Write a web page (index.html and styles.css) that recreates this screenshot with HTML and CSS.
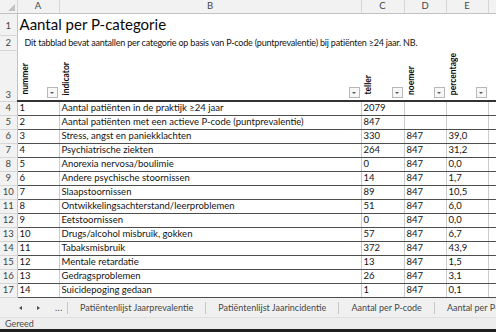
FILE: index.html
```html
<!DOCTYPE html>
<html lang="nl">
<head>
  <meta charset="UTF-8">
  <meta name="viewport" content="width=device-width, initial-scale=1.0">
  <title>Aantal per P-categorie</title>
  <link rel="stylesheet" href="styles.css">
</head>
<body>
  <div class="sheet">
    <table class="grid">
      <colgroup>
        <col class="c-rh"><col class="c-a"><col class="c-b"><col class="c-c"><col class="c-d"><col class="c-e"><col class="c-f">
      </colgroup>
      <thead>
        <tr class="letters">
          <th class="corner"><span class="corner__tri"></span></th>
          <th>A</th><th>B</th><th>C</th><th>D</th><th>E</th><th></th>
        </tr>
      </thead>
      <tbody>
        <tr class="r-title">
          <th class="rh">1</th>
          <td colspan="6" class="title">Aantal per P-categorie</td>
        </tr>
        <tr class="r-sub">
          <th class="rh">2</th>
          <td colspan="6" class="sub">Dit tabblad bevat aantallen per categorie op basis van P-code (puntprevalentie) bij patiënten ≥24 jaar. NB.</td>
        </tr>
        <tr class="r-head">
          <th class="rh">3</th>
          <td class="hd"><span class="hd__txt">nummer</span><span class="filter"></span></td>
          <td class="hd"><span class="hd__txt">indicator</span><span class="filter"></span></td>
          <td class="hd"><span class="hd__txt">teller</span><span class="filter"></span></td>
          <td class="hd"><span class="hd__txt">noemer</span><span class="filter"></span></td>
          <td class="hd"><span class="hd__txt">percentage</span><span class="filter"></span></td>
          <td class="hd"></td>
        </tr>
        <tr><th class="rh">4</th><td>1</td><td>Aantal patiënten in de praktijk ≥24 jaar</td><td>2079</td><td></td><td></td><td class="off"></td></tr>
        <tr><th class="rh">5</th><td>2</td><td>Aantal patiënten met een actieve P-code (puntprevalentie)</td><td>847</td><td></td><td></td><td class="off"></td></tr>
        <tr><th class="rh">6</th><td>3</td><td>Stress, angst en paniekklachten</td><td>330</td><td>847</td><td>39,0</td><td class="off"></td></tr>
        <tr><th class="rh">7</th><td>4</td><td>Psychiatrische ziekten</td><td>264</td><td>847</td><td>31,2</td><td class="off"></td></tr>
        <tr><th class="rh">8</th><td>5</td><td>Anorexia nervosa/boulimie</td><td>0</td><td>847</td><td>0,0</td><td class="off"></td></tr>
        <tr><th class="rh">9</th><td>6</td><td>Andere psychische stoornissen</td><td>14</td><td>847</td><td>1,7</td><td class="off"></td></tr>
        <tr><th class="rh">10</th><td>7</td><td>Slaapstoornissen</td><td>89</td><td>847</td><td>10,5</td><td class="off"></td></tr>
        <tr><th class="rh">11</th><td>8</td><td>Ontwikkelingsachterstand/leerproblemen</td><td>51</td><td>847</td><td>6,0</td><td class="off"></td></tr>
        <tr><th class="rh">12</th><td>9</td><td>Eetstoornissen</td><td>0</td><td>847</td><td>0,0</td><td class="off"></td></tr>
        <tr><th class="rh">13</th><td>10</td><td>Drugs/alcohol misbruik, gokken</td><td>57</td><td>847</td><td>6,7</td><td class="off"></td></tr>
        <tr><th class="rh">14</th><td>11</td><td>Tabaksmisbruik</td><td>372</td><td>847</td><td>43,9</td><td class="off"></td></tr>
        <tr><th class="rh">15</th><td>12</td><td>Mentale retardatie</td><td>13</td><td>847</td><td>1,5</td><td class="off"></td></tr>
        <tr><th class="rh">16</th><td>13</td><td>Gedragsproblemen</td><td>26</td><td>847</td><td>3,1</td><td class="off"></td></tr>
        <tr><th class="rh">17</th><td>14</td><td>Suicidepoging gedaan</td><td>1</td><td>847</td><td>0,1</td><td class="off"></td></tr>
      </tbody>
    </table>
  </div>

  <div class="tabs">
    <div class="tabs__nav">
      <span class="tabs__arrow tabs__arrow--left"></span>
      <span class="tabs__arrow tabs__arrow--right"></span>
      <span class="tabs__more">...</span>
    </div>
    <span class="tab">Patiëntenlijst Jaarprevalentie</span>
    <span class="tab">Patiëntenlijst Jaarincidentie</span>
    <span class="tab">Aantal per P-code</span>
    <span class="tab">Aantal per P-code</span>
  </div>

  <div class="status">Gereed</div>
  <div class="taskbar"></div>
</body>
</html>
```

FILE: styles.css
```css
body {
  margin: 0;
  width: 496px;
  height: 332px;
  overflow: hidden;
  display: flex;
  flex-direction: column;
  background-color: white;
  color: hsl(0, 0%, 8%);
  font-family: Lato, "Open Sans", sans-serif;
  font-size: 9.5px;
}

.sheet {
  height: 298px;
  overflow: hidden;
  flex-shrink: 0;
}

.grid {
  border-collapse: collapse;
  table-layout: fixed;
  width: 496px;
}
.c-rh { width: 17px; }
.c-a { width: 42px; }
.c-b { width: 302px; }
.c-c { width: 43px; }
.c-d { width: 42px; }
.c-e { width: 42px; }
.c-f { width: 8px; }

.grid tr {
  height: 14px;
}
.grid td,
.grid th {
  padding: 0 2px;
  line-height: 12px;
  white-space: nowrap;
  overflow: hidden;
  text-align: left;
  font-weight: normal;
  border-bottom: 1px solid hsl(0, 0%, 30%);
  border-right: 1px solid hsl(0, 0%, 80%);
}

/* kolomletters */
.grid .letters {
  height: 13px;
}
.letters th {
  text-align: center;
  color: hsl(0, 0%, 27%);
  background-color: hsl(0, 0%, 95%);
  border-bottom: 1px solid hsl(0, 0%, 76%);
  border-right: 1px solid hsl(0, 0%, 84%);
}
.corner {
  position: relative;
}
.corner__tri {
  position: absolute;
  right: 2px;
  bottom: 2px;
  width: 0;
  height: 0;
  border-left: 7px solid transparent;
  border-bottom: 7px solid hsl(0, 0%, 76%);
}

/* rijnummers */
.grid .rh {
  padding: 0;
  text-align: center;
  color: hsl(0, 0%, 27%);
  background-color: hsl(0, 0%, 95%);
  border-bottom: 1px solid hsl(0, 0%, 84%);
  border-right: 1px solid hsl(0, 0%, 76%);
}

.r-title td,
.r-sub td,
.r-head td {
  border-right: 0;
  border-bottom: 0;
  overflow: visible;
}
.grid .r-title {
  height: 22px;
}
.grid .r-title th {
  padding-top: 4px;
}
.grid .r-sub {
  height: 15px;
}
.title {
  padding-left: 3px;
  font-size: 15px;
  line-height: 20px;
  font-weight: bold;
  color: hsl(0, 0%, 3%);
}
.grid .sub {
  padding-left: 7px;
  font-size: 9px;
  letter-spacing: -0.2px;
}

.grid .r-head {
  height: 51px;
}
.grid .r-head th,
.grid .r-head td {
  vertical-align: bottom;
  border-bottom: 2px solid hsl(0, 0%, 20%);
}
.grid .r-head th {
  line-height: 13px;
  border-bottom-color: hsl(0, 0%, 84%);
  border-bottom-width: 1px;
}
.hd {
  position: relative;
}
.hd__txt {
  display: inline-block;
  margin-bottom: 2px;
  writing-mode: vertical-rl;
  transform: rotate(180deg);
  font-size: 8.5px;
  font-weight: bold;
  line-height: 10px;
  color: hsl(0, 0%, 3%);
}
.filter {
  position: absolute;
  right: 1px;
  bottom: 2px;
  width: 9px;
  height: 9px;
  border: 1px solid hsl(0, 0%, 72%);
  background-color: hsl(0, 0%, 97%);
}
.filter::after {
  content: "";
  position: absolute;
  left: 2px;
  top: 4px;
  border-left: 2.5px solid transparent;
  border-right: 2.5px solid transparent;
  border-top: 2.5px solid hsl(0, 0%, 35%);
}

.grid .off {
  border-right: 0;
}

/* bladtabs */
.tabs {
  display: flex;
  align-items: center;
  height: 19px;
  flex-shrink: 0;
  overflow: hidden;
  white-space: nowrap;
  background-color: hsl(0, 0%, 94%);
  color: hsl(0, 0%, 28%);
  font-size: 9px;
}
.tabs__nav {
  display: flex;
  align-items: center;
  width: 67px;
  flex-shrink: 0;
  height: 12px;
  border-right: 1px solid hsl(0, 0%, 78%);
}
.tabs__arrow {
  width: 0;
  height: 0;
  border-top: 2.5px solid transparent;
  border-bottom: 2.5px solid transparent;
}
.tabs__arrow--left {
  margin-left: 19px;
  border-right: 3px solid hsl(0, 0%, 30%);
}
.tabs__arrow--right {
  margin-left: 15px;
  border-left: 3px solid hsl(0, 0%, 30%);
}
.tabs__more {
  margin-left: 15px;
  letter-spacing: 0.5px;
}
.tab {
  padding: 0 12px;
  height: 12px;
  line-height: 12px;
  flex-shrink: 0;
  border-right: 1px solid hsl(0, 0%, 78%);
}

.status {
  height: 12px;
  flex-shrink: 0;
  padding-left: 5px;
  line-height: 12px;
  font-size: 9px;
  color: hsl(0, 0%, 30%);
  background-color: hsl(0, 0%, 93%);
  border-top: 1px solid hsl(0, 0%, 88%);
  box-sizing: border-box;
}

.taskbar {
  flex: 1;
  background-color: hsl(0, 0%, 12%);
}
```
